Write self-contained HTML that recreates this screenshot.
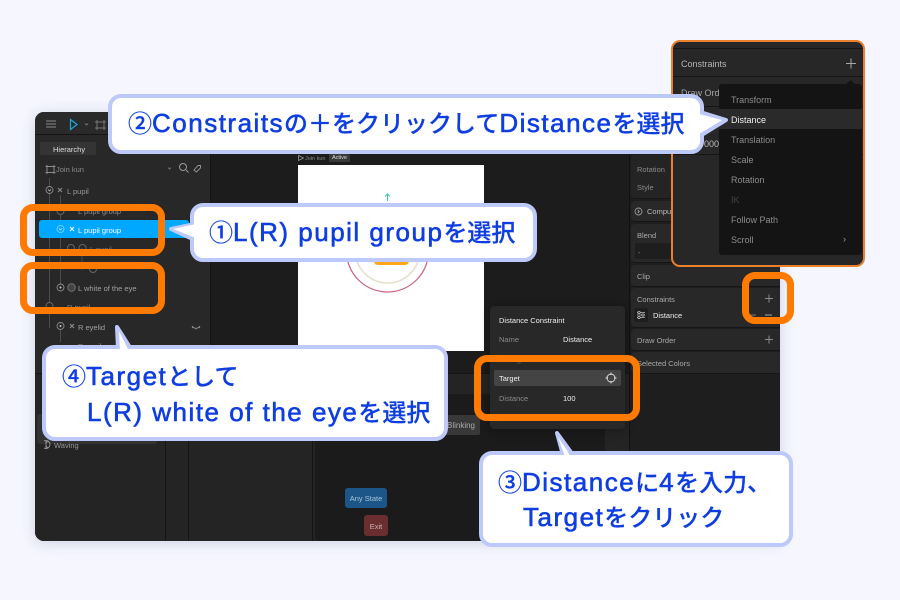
<!DOCTYPE html>
<html lang="ja"><head><meta charset="utf-8"><style>
html,body{margin:0;padding:0}
body{width:900px;height:600px;overflow:hidden;position:relative;background:#f5f6ff;font-family:"Liberation Sans","Noto Sans CJK JP",sans-serif}
div,span{position:absolute;box-sizing:border-box}
svg{position:absolute;overflow:visible}
.t{font-size:7.500px;line-height:10px;color:#a8a8a8;white-space:nowrap;margin-top:1.500px}
.w{color:#eee}
.g{color:#8a8a8a}
.sec{position:absolute;left:631px;width:149px;background:#282828;border-radius:4px 0 0 4px;border-bottom:1px solid #161616}
.dd{position:absolute;left:730px;font-size:9px;line-height:12px;color:#8c8c8c;white-space:nowrap}
.or{border:7px solid #ff7a00;border-radius:13px}
.c{font-family:"Noto Sans CJK JP",sans-serif;font-weight:500;color:#0f3ee0;font-size:24px;line-height:36px;white-space:nowrap;-webkit-text-stroke:.2px #0f3ee0}
.c b{font-family:"Liberation Sans",sans-serif;font-weight:400;font-size:26px;letter-spacing:1.500px;-webkit-text-stroke:.6px #0f3ee0}
</style></head><body>

<!-- app window -->
<div style="left:35px;top:112px;width:745px;height:429px;background:#1c1c1c;border-radius:9px 0 0 9px;overflow:hidden;box-shadow:0 2px 14px rgba(40,50,90,.18)">
  <div style="left:0;top:0;width:745px;height:23px;background:#2a2a2a;border-bottom:1px solid #151515"></div>
  <div style="left:0;top:23px;width:176px;height:238px;background:#282828;border-right:1px solid #151515"></div>
  <div style="left:0;top:261px;width:745px;height:168px;background:#242424;border-top:1px solid #151515"></div>
  <div style="left:130px;top:262px;width:1px;height:167px;background:#141414"></div>
  <div style="left:153px;top:262px;width:1px;height:167px;background:#141414"></div>
  <div style="left:277px;top:262px;width:1px;height:167px;background:#141414"></div>
  <div style="left:280px;top:282px;width:290px;height:147px;background:#1b1b1b;border-radius:3px"></div>
  <div style="left:594px;top:23px;width:151px;height:406px;background:#1e1e1e;border-left:1px solid #111"></div>
  <div style="left:5px;top:30px;width:56px;height:13px;background:#343434;border-radius:2px"></div>
  <div style="left:2px;top:302px;width:120px;height:30px;background:#333;border-radius:3px"></div>
</div>

<!-- toolbar icons -->
<svg style="left:0;top:0" width="900" height="600" fill="none">
  <path d="M46 121h10M46 124h10M46 127h10" stroke="#8a8a8a" stroke-width="1"/>
  <path d="M70.500 119.500L77 124.500 70.500 129.500Z" stroke="#1ea6e0" stroke-width="1.200"/>
  <path d="M85 123.500l1.500 1.500 1.500-1.500" stroke="#888" stroke-width=".8"/>
  <path d="M97 120v10M104 120v10M95 122h11M95 128h11" stroke="#777" stroke-width="1"/>
  <path d="M47 165v9M54 165v9M45.500 166.500h10M45.500 172.500h10" stroke="#8a8a8a" stroke-width="1"/>
  <path d="M168 167.500l1.500 1.500 1.500-1.500" stroke="#888" stroke-width=".8"/>
  <circle cx="183" cy="167" r="3.500" stroke="#999"/><path d="M186 170l2.500 2.500" stroke="#999"/>
  <path d="M194 170l4-4.500h2.500v2.500l-4 4z" stroke="#999" stroke-width=".9"/>
  <!-- tree -->
  <path d="M49.500 178v150M60.500 195v90M82 248v22" stroke="#4b4b4b" stroke-width="1"/>
  <circle cx="49.500" cy="190" r="3.500" fill="#282828" stroke="#8a8a8a" stroke-width=".9"/>
  <path d="M48 189.500l1.500 1.500 1.500-1.500" stroke="#ccc" stroke-width=".7"/>
  <path d="M58 188l4 4M62 188l-4 4" stroke="#888" stroke-width="1.200"/>
  <circle cx="60.500" cy="211" r="3.500" fill="#282828" stroke="#666"/>
  <circle cx="82.500" cy="248" r="3.500" stroke="#666"/>
  <circle cx="71" cy="248" r="3.500" fill="#282828" stroke="#666"/>
  <circle cx="93" cy="269" r="3.500" fill="#282828" stroke="#666"/>
  <circle cx="60.500" cy="287.500" r="3.500" fill="#282828" stroke="#8a8a8a" stroke-width=".9"/>
  <circle cx="60.500" cy="287.500" r="1" fill="#ccc"/>
  <circle cx="71.500" cy="287.500" r="3.800" fill="#444" stroke="#777" stroke-width=".9"/>
  <circle cx="49.500" cy="306" r="3.500" fill="#282828" stroke="#666"/>
  <circle cx="60.500" cy="326" r="3.500" fill="#282828" stroke="#8a8a8a" stroke-width=".9"/>
  <circle cx="60.500" cy="326" r="1" fill="#ccc"/>
  <path d="M70 324l4 4M74 324l-4 4" stroke="#888" stroke-width="1.200"/>
  <path d="M60.500 330v12" stroke="#4b4b4b"/>
  <path d="M192 326c2 3 6 3 8 0M193 327l-1 1M196 328v1.500M199 327l1 1" stroke="#999" stroke-width=".8"/>
  <path d="M44 441a4 4 0 1 1 0 7M48 441a4 4 0 0 0 0 7M46 441v7" stroke="#999" stroke-width=".9"/>
  <!-- canvas arrow icon -->
  <path d="M298.500 155.500l5 2.500-5 2.500z" stroke="#999" stroke-width=".8"/>
</svg>

<span class="t" style="left:53px;top:143px;color:#ddd">Hierarchy</span>
<span class="t g" style="left:56px;top:163px">Join kun</span>
<span class="t" style="left:67px;top:185px;color:#999">L pupil</span>
<span class="t" style="left:78px;top:205px;color:#888">L pupil group</span>

<!-- selected row -->
<div style="left:39px;top:220px;width:150px;height:18px;background:#00a8ff;border-radius:3px"></div>
<svg style="left:0;top:0" width="300" height="300" fill="none">
  <circle cx="60.500" cy="229" r="3.500" stroke="#8fd6ff" stroke-width=".8"/>
  <path d="M59 228.500l1.500 1.500 1.500-1.500" stroke="#e8f7ff" stroke-width=".7"/>
  <path d="M70 227l4 4M74 227l-4 4" stroke="#e8f7ff" stroke-width="1.200"/>
</svg>
<span class="t w" style="left:78px;top:224px;color:#fff">L pupil group</span>
<span class="t" style="left:90px;top:243px;color:#777">L pupil</span>
<span class="t" style="left:78px;top:282px;color:#a0a0a0">L white of the eye</span>
<span class="t" style="left:67px;top:301px;color:#888">R pupil</span>
<span class="t" style="left:78px;top:321px;color:#a0a0a0">R eyelid</span>
<span class="t" style="left:78px;top:340px;color:#888">R pupil group</span>
<span class="t" style="left:54px;top:439px;color:#999">Waving</span>

<!-- canvas -->
<span class="t" style="left:305px;top:152px;font-size:5.500px;color:#888">Join kun</span>
<div style="left:329px;top:154px;width:21px;height:8px;background:#3a3a3a;border-radius:1px;font-size:5.500px;line-height:9px;color:#ddd;text-align:center">Active</div>
<div style="left:298px;top:165px;width:186px;height:186px;background:#fff"></div>
<svg style="left:0;top:0" width="600" height="400" fill="none">
  <path d="M387.500 201v-7M385 196.500l2.500-2.500 2.500 2.500" stroke="#3ac9a8" stroke-width="1"/>
  <circle cx="387.500" cy="251" r="41" stroke="#c9607e" stroke-width="1.200"/>
  <circle cx="387.500" cy="251" r="32" stroke="#e8e2d2" stroke-width="1.800"/>
  <rect x="374" y="255" width="35" height="10" rx="4" fill="#ffa81e"/>
</svg>

<!-- bottom graph nodes -->
<div style="left:438px;top:415px;width:42px;height:20px;background:#383838;border-radius:2px;font-size:8px;line-height:22px;color:#aaa;text-align:right;padding-right:5px">Blinking</div>
<div style="left:345px;top:488px;width:42px;height:20px;background:#1c5688;border-radius:3px;font-size:7.500px;line-height:22px;color:#a9c2d8;text-align:center">Any State</div>
<div style="left:364px;top:515px;width:24px;height:21px;background:#6a2e30;border-radius:3px;font-size:7.500px;line-height:23px;color:#c9b0b0;text-align:center">Exit</div>

<!-- distance panel -->
<div style="left:490px;top:306px;width:135px;height:123px;background:#282828;border-radius:4px;box-shadow:0 2px 10px rgba(0,0,0,.35)"></div>
<span class="t w" style="left:499px;top:314px">Distance Constraint</span>
<span class="t g" style="left:499px;top:333px">Name</span>
<span class="t w" style="left:563px;top:333px">Distance</span>
<span class="t g" style="left:499px;top:353px;color:#666">Strength</span>
<span class="t w" style="left:563px;top:353px;color:#aaa">100%</span>
<div style="left:494px;top:370px;width:127px;height:16px;background:#444;border-radius:2px"></div>
<span class="t w" style="left:499px;top:372px">Target</span>
<svg style="left:0;top:0" width="640" height="400" fill="none">
  <circle cx="611" cy="378" r="4" stroke="#ddd" stroke-width=".9"/>
  <path d="M611 372.500v2.500M611 381v2.500M605.500 378h2.500M614 378h2.500" stroke="#ddd" stroke-width=".9"/>
</svg>
<span class="t g" style="left:499px;top:392px">Distance</span>
<span class="t w" style="left:563px;top:392px">100</span>

<!-- right panel -->
<div class="sec" style="top:155px;height:44px;background:#242424"></div>
<span class="t g" style="left:637px;top:163px">Rotation</span>
<span class="t g" style="left:637px;top:181px">Style</span>
<div class="sec" style="top:201px;height:21px"></div>
<svg style="left:0;top:0" width="660" height="230" fill="none"><circle cx="638.500" cy="211.500" r="3.500" stroke="#999" stroke-width=".9"/><path d="M637.800 210l1.500 1.500-1.500 1.500" stroke="#ccc" stroke-width=".7"/></svg>
<span class="t" style="left:647px;top:205px;color:#bbb">Compute</span>
<div class="sec" style="top:224px;height:39px"></div>
<span class="t" style="left:637px;top:229px;color:#aaa">Blend</span>
<div style="left:635px;top:243px;width:145px;height:16px;background:#1e1e1e;border-radius:2px"></div>
<span class="t g" style="left:638px;top:246px">-</span>
<div class="sec" style="top:265px;height:22px"></div>
<span class="t" style="left:637px;top:270px;color:#aaa">Clip</span>
<div class="sec" style="top:288px;height:40px"></div>
<span class="t" style="left:637px;top:293px;color:#aaa">Constraints</span>
<div style="left:634px;top:308px;width:14px;height:14px;background:#1e1e1e;border-radius:2px"></div>
<svg style="left:0;top:0" width="790" height="370" fill="none">
  <path d="M637 312.500h8M637 315h8M637 317.500h8" stroke="#bbb" stroke-width=".8"/>
  <circle cx="639" cy="312.500" r="1.200" fill="#222" stroke="#ccc" stroke-width=".7"/>
  <circle cx="643" cy="315" r="1.200" fill="#222" stroke="#ccc" stroke-width=".7"/>
  <circle cx="639" cy="317.500" r="1.200" fill="#222" stroke="#ccc" stroke-width=".7"/>
  <path d="M765 298.500h8M769 294.500v8" stroke="#8a8a8a" stroke-width="1"/>
  <path d="M750 315h6" stroke="#777" stroke-width="1"/>
  <rect x="765" y="314" width="7" height="2" fill="#666"/>
</svg>
<span class="t w" style="left:653px;top:309px">Distance</span>
<div class="sec" style="top:329px;height:22px"></div>
<span class="t" style="left:637px;top:334px;color:#aaa">Draw Order</span>
<svg style="left:0;top:0" width="790" height="370" fill="none"><path d="M765 339.500h8M769 335.500v8" stroke="#8a8a8a" stroke-width="1"/></svg>
<div class="sec" style="top:352px;height:22px"></div>
<span class="t" style="left:637px;top:357px;color:#aaa">Selected Colors</span>

<!-- orange outlines -->
<div class="or" style="left:20px;top:204px;width:145px;height:52px"></div>
<div class="or" style="left:20px;top:262px;width:145px;height:52px"></div>
<div class="or" style="left:742px;top:272px;width:52px;height:52px"></div>
<div class="or" style="left:474px;top:355px;width:166px;height:66px"></div>

<!-- top-right popup -->
<div style="left:671px;top:40px;width:194px;height:227px;background:#272727;border:2px solid #e8802c;border-radius:9px;overflow:hidden">
  <div style="left:0;top:6px;width:190px;height:1px;background:#151515"></div>
  <div style="left:0;top:34px;width:190px;height:1px;background:#151515"></div>
  <div style="left:0;top:64px;width:190px;height:1px;background:#151515"></div>
  <div style="left:0;top:112px;width:190px;height:1px;background:#151515"></div>
</div>
<span class="dd" style="left:681px;top:58px;color:#b5b5b5">Constraints</span>
<span class="dd" style="left:681px;top:87px;color:#a5a5a5">Draw Order</span>
<span class="dd" style="left:704px;top:138px;color:#bbb">0000</span>
<svg style="left:0;top:0" width="870" height="90" fill="none">
  <path d="M846 63.500h10M851 58.500v10" stroke="#a8a8a8" stroke-width="1"/>
  <path d="M846 84l4.500-4 4.500 4z" fill="#141414"/>
</svg>
<div style="left:719px;top:84px;width:143px;height:171px;background:#141414;border-radius:3px"></div>
<div style="left:719px;top:109px;width:143px;height:20px;background:#2a2a2a"></div>
<span class="dd" style="left:731px;top:94px">Transform</span>
<span class="dd" style="left:731px;top:114px;color:#f0f0f0">Distance</span>
<span class="dd" style="left:731px;top:134px">Translation</span>
<span class="dd" style="left:731px;top:154px">Scale</span>
<span class="dd" style="left:731px;top:174px">Rotation</span>
<span class="dd" style="left:731px;top:194px;color:#444">IK</span>
<span class="dd" style="left:731px;top:214px">Follow Path</span>
<span class="dd" style="left:731px;top:234px">Scroll</span>
<span class="dd" style="left:843px;top:233px;color:#999">›</span>

<!-- callouts -->
<svg style="left:0;top:0" width="900" height="600" fill="none">
  <g stroke="#bcc9f9" stroke-width="4" stroke-linejoin="round" fill="#fff">
    <path d="M195 224L171 229 195 240Z"/>
    <path d="M700 112L726 120 700 136Z"/>
    <path d="M563 455L557 433 573 455Z"/>
    <path d="M118 349L117 327 131 349Z"/>
    <rect x="110" y="96" width="592" height="56" rx="11"/>
    <rect x="192" y="205" width="343" height="55" rx="11"/>
    <rect x="481" y="453" width="310" height="92" rx="11"/>
    <rect x="44" y="347" width="402" height="92" rx="11"/>
  </g>
  <g fill="#fff">
    <path d="M196 224L173 229 196 238Z"/>
    <path d="M699 114L722 120 699 134Z"/>
    <path d="M565 457L558 437 571 457Z"/>
    <path d="M120 351L119 331 129 351Z"/>
  </g>
</svg>
<span class="c" style="left:128px;top:104px">②<b>Constraits</b>の＋をクリックして<b>Distance</b>を選択</span>
<span class="c" style="left:209px;top:213px">①<b>L(R) pupil group</b>を選択</span>
<span class="c" style="left:62px;top:357px">④<b>Target</b>として</span>
<span class="c" style="left:87px;top:393px"><b>L(R) white of the eye</b>を選択</span>
<span class="c" style="left:498px;top:463px">③<b>Distance</b>に<b>4</b>を入力、</span>
<span class="c" style="left:523px;top:498px"><b>Target</b>をクリック</span>
</body></html>
